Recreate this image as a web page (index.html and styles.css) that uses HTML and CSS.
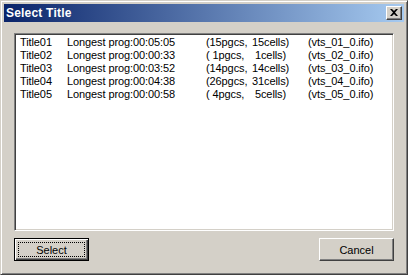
FILE: index.html
```html
<!DOCTYPE html>
<html>
<head>
<meta charset="utf-8">
<link rel="stylesheet" href="styles.css">
</head>
<body>
<div class="window">
  <div class="titlebar">
    <span class="title">Select Title</span>
    <button class="close" aria-label="Close">
      <svg width="8" height="7" viewBox="0 0 8 7"><path d="M0 0h2l2 2 2-2h2L5 3.5 8 7H6L4 5 2 7H0l3-3.5z" fill="#000"/></svg>
    </button>
  </div>
  <div class="content">
    <div class="list">
      <div class="row"><span>Title01</span><span>Longest prog:00:05:05</span><span class="pc"><span class="pg">(15pgcs,</span><span>15cells)</span></span><span>(vts_01_0.ifo)</span></div>
      <div class="row"><span>Title02</span><span>Longest prog:00:00:33</span><span class="pc"><span class="pg">( 1pgcs,</span><span> 1cells)</span></span><span>(vts_02_0.ifo)</span></div>
      <div class="row"><span>Title03</span><span>Longest prog:00:03:52</span><span class="pc"><span class="pg">(14pgcs,</span><span>14cells)</span></span><span>(vts_03_0.ifo)</span></div>
      <div class="row"><span>Title04</span><span>Longest prog:00:04:38</span><span class="pc"><span class="pg">(26pgcs,</span><span>31cells)</span></span><span>(vts_04_0.ifo)</span></div>
      <div class="row"><span>Title05</span><span>Longest prog:00:00:58</span><span class="pc"><span class="pg">( 4pgcs,</span><span> 5cells)</span></span><span>(vts_05_0.ifo)</span></div>
    </div>
    <div class="buttons">
      <button class="btn default"><span class="focus">Select</span></button>
      <button class="btn">Cancel</button>
    </div>
  </div>
</div>
</body>
</html>
```
FILE: styles.css
```css
html, body {
  margin: 0;
  padding: 0;
  background: #d4d0c8;
}
.window {
  box-sizing: border-box;
  width: 408px;
  height: 275px;
  background: #d4d0c8;
  border: 1px solid;
  border-color: #d4d0c8 #404040 #404040 #d4d0c8;
  box-shadow: inset 1px 1px #fff, inset -1px -1px #808080;
  padding: 3px;
  display: flex;
  flex-direction: column;
  font-family: "Liberation Sans", Arial, sans-serif;
  font-size: 11px;
  color: #000;
}
.titlebar {
  height: 18px;
  background: linear-gradient(to right, #0a246a, #a6caf0);
  display: flex;
  align-items: center;
  justify-content: space-between;
  padding: 0 2px 0 2px;
}
.title {
  color: #fff;
  font-weight: bold;
  font-size: 12px;
  letter-spacing: 0.2px;
}
.close {
  box-sizing: border-box;
  width: 16px;
  height: 14px;
  padding: 0;
  margin: 0;
  background: #d4d0c8;
  border: 1px solid;
  border-color: #fff #404040 #404040 #fff;
  box-shadow: inset -1px -1px #808080;
  display: flex;
  align-items: center;
  justify-content: center;
}
.close svg {
  display: block;
  margin: 0 1px 1px 0;
}
.content {
  flex: 1;
  display: flex;
  flex-direction: column;
  padding: 11px 10px 10px 10px;
  gap: 7px;
}
.list {
  box-sizing: border-box;
  height: 198px;
  background: #fff;
  border: 1px solid;
  border-color: #808080 #fff #fff #808080;
  box-shadow: inset 1px 1px #404040, inset -1px -1px #d4d0c8;
  padding: 2px 2px 2px 5px;
}
.row {
  display: grid;
  grid-template-columns: 47px 139px 102px auto;
  height: 13px;
  line-height: 13px;
  white-space: pre;
  letter-spacing: -0.1px;
}
.pg {
  display: inline-block;
  width: 46px;
}
.buttons {
  display: flex;
  justify-content: space-between;
}
.btn {
  box-sizing: border-box;
  width: 75px;
  height: 23px;
  padding: 0;
  margin: 0;
  background: #d4d0c8;
  font-family: "Liberation Sans", Arial, sans-serif;
  font-size: 11px;
  color: #000;
  border: 1px solid;
  border-color: #fff #404040 #404040 #fff;
  box-shadow: inset -1px -1px #808080;
  display: flex;
  align-items: center;
  justify-content: center;
}
.btn.default {
  border: 1px solid #000;
  box-shadow: inset 1px 1px #fff, inset -1px -1px #404040, inset -2px -2px #808080;
  padding: 3px;
}
.focus {
  box-sizing: border-box;
  width: 100%;
  height: 100%;
  border: 1px dotted #000;
  display: flex;
  align-items: center;
  justify-content: center;
}
```
